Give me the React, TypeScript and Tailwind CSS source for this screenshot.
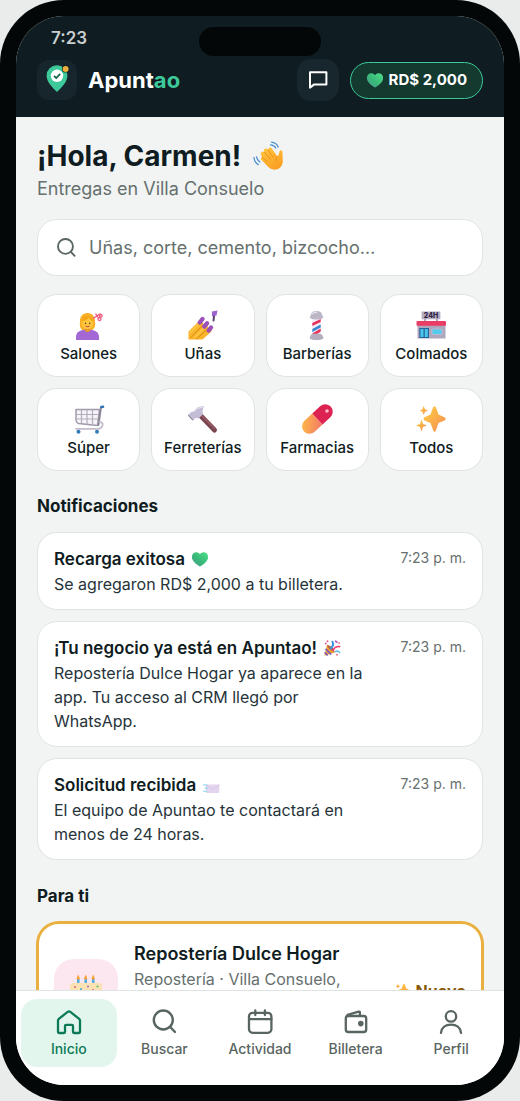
import React from "react";

type IconProps = { className?: string };

const SearchIcon: React.FC<IconProps> = ({ className }) => (
  <svg className={className} viewBox="0 0 28 28" fill="none" stroke="currentColor" strokeWidth="2.4" strokeLinecap="round" aria-hidden="true">
    <circle cx="13.3" cy="12" r="9.5" />
    <path d="M20.2 19 25 24" />
  </svg>
);

const HomeIcon: React.FC<IconProps> = ({ className }) => (
  <svg className={className} viewBox="0 0 28 28" fill="none" stroke="currentColor" strokeWidth="2.3" strokeLinejoin="round" aria-hidden="true">
    <path d="M3 12.6V23.6Q3 25 4.4 25H9Q10 25 10 24V18Q10 16.9 11.1 16.9H16.9Q18 16.9 18 18V24Q18 25 19 25H23.6Q25 25 25 23.6V12.6Q25 11.6 24.2 10.9L15 3.7Q14 3 13 3.7L3.8 10.9Q3 11.6 3 12.6Z" />
  </svg>
);

const CalendarIcon: React.FC<IconProps> = ({ className }) => (
  <svg className={className} viewBox="0 0 28 28" fill="none" stroke="currentColor" strokeWidth="2.3" strokeLinecap="round" aria-hidden="true">
    <rect x="3" y="4.8" width="22.4" height="20" rx="3.6" />
    <path d="M3 11.2H25.4M9.3 2.4V7M18.9 2.4V7" />
  </svg>
);

const WalletIcon: React.FC<IconProps> = ({ className }) => (
  <svg className={className} viewBox="0 0 28 28" fill="none" stroke="currentColor" strokeWidth="2.3" strokeLinejoin="round" aria-hidden="true">
    <rect x="3.8" y="8" width="20.4" height="16" rx="2.6" />
    <path d="M4.600 8.400 5.600 6.800 16.600 3.600Q17.900 3.300 17.900 4.600V8" />
    <circle cx="18.8" cy="15.6" r="2.8" fill="currentColor" stroke="none" />
  </svg>
);

const UserIcon: React.FC<IconProps> = ({ className }) => (
  <svg className={className} viewBox="0 0 28 28" fill="none" stroke="currentColor" strokeWidth="2.3" strokeLinecap="round" aria-hidden="true">
    <circle cx="14" cy="8.4" r="5.2" />
    <path d="M4 24.8C4.6 19.6 8.6 16.6 14 16.6S23.4 19.6 24 24.8" />
  </svg>
);

const ChatIcon: React.FC<IconProps> = ({ className }) => (
  <svg className={className} viewBox="0 0 24 24" fill="none" stroke="currentColor" strokeWidth="2" strokeLinejoin="round" aria-hidden="true">
    <path d="M4 19.6V4.2H20.4V16.4H8.2Z" />
  </svg>
);

const LogoPin: React.FC<IconProps> = ({ className }) => (
  <svg className={className} viewBox="0 0 40 40" aria-hidden="true">
    <path d="M20 32C15.5 27.3 9.6 22 9.6 15.7A10.4 10.4 0 0 1 30.4 15.7C30.4 22 24.5 27.3 20 32Z" fill="#3ec99b" />
    <circle cx="20" cy="15.8" r="6.2" fill="#fff" />
    <path d="M17 15.8 19.2 18 23.2 13.8" fill="none" stroke="#11604a" strokeWidth="1.7" />
    <circle cx="28.6" cy="9" r="3.6" fill="#0f1c21" />
    <circle cx="28.6" cy="9" r="3" fill="#eeaf3c" />
  </svg>
);

const HeartIcon: React.FC<IconProps> = ({ className }) => (
  <svg className={className} viewBox="0 0 20 20" aria-hidden="true">
    <defs>
      <linearGradient id="heart" x1="0" y1="1" x2="1" y2="0">
        <stop offset="0" stopColor="#4f9f95" />
        <stop offset=".45" stopColor="#38b878" />
        <stop offset="1" stopColor="#4fe08a" />
      </linearGradient>
    </defs>
    <path d="M10 18.4C6 16 1 12.4 1 7.8C1 4.600 3.200 2.600 5.900 2.600C7.800 2.600 9.200 3.400 10 4.800C10.800 3.400 12.200 2.600 14.100 2.600C16.800 2.600 19 4.600 19 7.800C19 12.400 14 16 10 18.400Z" fill="url(#heart)" />
  </svg>
);

const WaveIcon: React.FC<IconProps> = ({ className }) => (
  <svg className={className} viewBox="0 0 32 32" fill="none" strokeLinecap="round" aria-hidden="true">
    <defs>
      <linearGradient id="wave" x1="0" y1="0" x2=".6" y2="1">
        <stop offset="0" stopColor="#ffc93f" />
        <stop offset="1" stopColor="#fb9f24" />
      </linearGradient>
    </defs>
    <path
      d="M8.200 12.200Q10 10.600 11.500 12.200L10.900 10.300Q11 8.300 13 8.400Q14.200 8.500 15 10L15.600 8.200Q17.400 6.800 19 8.700L24.300 16.200Q25.500 16 26 13.500L26.600 11Q28 9.600 29.300 11.200Q29.800 13 29.500 15L29.800 21Q29.500 27.500 24.500 29.300Q19 31 15 26.800L8 19.600Q7.200 17.600 9.200 17L7.800 14.500Q7.200 13.200 8.200 12.200Z"
      fill="url(#wave)"
    />
    <path d="M11.500 12.200 17 19M15 10 20 17M9.200 17 14 21.500M24.300 16.200Q22.500 18 22.800 20.500" stroke="#e98a1e" strokeWidth=".9" />
    <g stroke="#4a90d0" strokeWidth="1.3">
      <path d="M17.500 4.800Q21 4.800 22.800 8" />
      <path d="M18.500 2.200Q23.200 2.600 25.200 7" />
      <path d="M3.600 17Q4 20 6.800 22" />
      <path d="M1 17.500Q1.300 22.200 5.200 24.600" />
    </g>
  </svg>
);

const SalonIcon: React.FC<IconProps> = ({ className }) => (
  <svg className={className} viewBox="0 0 32 32" aria-hidden="true">
    <path d="M7 13C6.500 6 11 4 14.500 4C19.500 4 22.500 8 22 13C23 17 21 20.500 19 21H10C7 20 6.500 17 7 13Z" fill="#f9b12a" />
    <path d="M3 31V28C3 22.500 8 20.500 14.500 20.500S26 22.500 26 28V31Z" fill="#a368d4" />
    <path d="M12 19H17V22Q14.500 24 12 22Z" fill="#e99a20" />
    <circle cx="14.500" cy="14.600" r="5.500" fill="#ffc83d" />
    <path d="M9 12Q14 12 16 8Q17 11 20 12.500Q20 7 14.500 6.500Q9 7 9 12Z" fill="#f5a51c" />
    <circle cx="12.500" cy="14.200" r=".8" fill="#5b3825" />
    <circle cx="16.700" cy="14.200" r=".8" fill="#5b3825" />
    <path d="M12.500 17Q14.500 18.600 16.600 17" stroke="#c23c50" fill="none" />
    <g fill="none" stroke="#ee5a80" strokeWidth="1.300">
      <path d="M20 9.500 27.500 4.600M22.500 4.600 25.500 9" />
      <circle cx="26.500" cy="10" r="1.500" />
      <circle cx="27.800" cy="6.800" r="1.300" />
    </g>
  </svg>
);

const NailsIcon: React.FC<IconProps> = ({ className }) => (
  <svg className={className} viewBox="0 0 32 32" strokeLinecap="round" aria-hidden="true">
    <path d="M1.500 22.500 11.500 12.500Q14 11 15.500 13.500L17 15.500Q19.500 15 20.500 17.500L21.500 19.500Q25 19.500 24.500 22.500L15.500 30.500H1.500Z" fill="#f9b429" />
    <path d="M4 28.500 15.500 16.500M9.500 30 20.500 20" stroke="#d98a18" />
    <path d="M3 24 11.500 15.500M8 28 16.500 19.500" stroke="#ffc94a" strokeWidth="1.600" />
    <path d="M12.800 13.500 15.500 10M17.300 17.500 20 14.300M21.700 21.500 24 18.500" stroke="#9a50b8" strokeWidth="4.400" />
    <path d="M25 2.500 30.500 1.500 29.500 6.500 25 7.500Z" fill="#9d63d0" />
    <path d="M27 7.500 26.500 11.500" stroke="#554069" strokeWidth="2" />
  </svg>
);

const BarberIcon: React.FC<IconProps> = ({ className }) => (
  <svg className={className} viewBox="0 0 32 32" aria-hidden="true">
    <path d="M11.300 9H19.700V26H11.300Z" fill="#f1edf7" />
    <path d="M11.300 14 19.700 10V13L11.300 17ZM11.300 24.500 19.700 19.500V22.500L17 24.500 13 26.500Z" fill="#e7315f" />
    <path d="M11.300 20 19.700 15.500V18.500L11.300 23Z" fill="#3684d1" />
    <path d="M10 6Q10 2 15.500 2T21 6L22.500 8Q21.500 10.500 15.500 10.500T8.500 8Z" fill="#bcb7c7" />
    <path d="M11 5Q13 3 16 3.500" stroke="#e9e5ef" strokeWidth="1.400" fill="none" />
    <path d="M10 25.500Q15.500 23.500 21 25.500L22.500 29Q21.500 31 15.500 31T8.500 29Z" fill="#b3adbf" />
  </svg>
);

const StoreIcon: React.FC<IconProps> = ({ className }) => (
  <svg className={className} viewBox="0 0 32 32" aria-hidden="true">
    <path d="M10 9V13M22 9V13" stroke="#8b8299" strokeWidth="1.400" />
    <rect x="6.600" y="2.500" width="18.800" height="7.800" rx=".6" fill="#b4adc4" />
    <text x="16" y="9" textAnchor="middle" fontSize="7" fontWeight="800" fill="#30233f" fontFamily="Inter, sans-serif">24H</text>
    <rect x="2.500" y="15" width="28" height="14.500" fill="#afa7be" />
    <rect x="1.500" y="12" width="29.500" height="4.800" rx="1" fill="#ea3d65" />
    <rect x="4.300" y="19" width="9.700" height="10" fill="#28639a" />
    <path d="M5.500 20H8.500V28H5.500ZM9.800 20H12.800V28H9.800Z" fill="#48c7ed" />
    <rect x="17" y="20" width="10" height="5.500" rx=".5" fill="#54cbee" stroke="#c5bdd0" strokeWidth=".8" />
  </svg>
);

const CartIcon: React.FC<IconProps> = ({ className }) => (
  <svg className={className} viewBox="0 0 32 32" fill="none" strokeLinecap="round" strokeLinejoin="round" aria-hidden="true">
    <path d="M3 6.500H26.500L24.500 22.500 5.500 20.500Q3.500 20 3 17Z" fill="#f6f4f8" stroke="#a19aab" strokeWidth="1.500" />
    <path d="M8.500 7V20M14 7V21M19.500 7V21.500M3.500 11.500H25.500M4 16H25" stroke="#b3adbc" strokeWidth="1.200" />
    <path d="M25.500 22 28 4.500" stroke="#8c8595" strokeWidth="1.800" />
    <path d="M26.500 19Q30.500 19.500 29.500 22.500Q28.500 25.800 25 25.800H3" stroke="#c5bdcc" strokeWidth="1.800" />
    <path d="M28.300 4 30 3.800" stroke="#2f75b5" strokeWidth="2.600" />
    <circle cx="5.500" cy="28.700" r="2" fill="#347bbb" />
    <circle cx="24" cy="28.700" r="2" fill="#347bbb" />
  </svg>
);

const HammerIcon: React.FC<IconProps> = ({ className }) => (
  <svg className={className} viewBox="0 0 32 32" aria-hidden="true">
    <path d="M12 11 27.500 27" stroke="#7b4550" strokeWidth="5" strokeLinecap="round" />
    <path d="M13 11 27.500 25.500" stroke="#99606a" strokeWidth="1.300" strokeLinecap="round" />
    <path d="M1.500 11.500 4.500 8.800 7 8.500Q9.500 3 17 3.200L15.500 7.500 16 11 11.500 15.500 8.500 15 6.500 17Z" fill="#c4bdd6" />
    <path d="M1.500 11.500 6.500 17 5.500 17.500 1 12.500Z" fill="#817b91" />
    <path d="M7 8.500Q10 4.500 16 4" stroke="#e9e4f3" fill="none" />
  </svg>
);

const PillIcon: React.FC<IconProps> = ({ className }) => (
  <svg className={className} viewBox="0 0 32 32" aria-hidden="true">
    <defs>
      <linearGradient id="pill" x1="0" y1="0" x2="1" y2="1">
        <stop offset="0" stopColor="#ffbe42" />
        <stop offset="1" stopColor="#f27968" />
      </linearGradient>
    </defs>
    <g transform="rotate(-43 16.4 16)">
      <path d="M16.400 8.500H5.700A7.500 7.500 0 0 0 5.700 23.500H16.400Z" fill="url(#pill)" />
      <path d="M16.400 8.500H27.100A7.500 7.500 0 0 1 27.100 23.500H16.400Z" fill="#dc2352" />
    </g>
    <circle cx="26" cy="8" r="1.800" fill="#ffb8c9" />
  </svg>
);

const SparklesIcon: React.FC<IconProps> = ({ className }) => (
  <svg className={className} viewBox="0 0 32 32" aria-hidden="true">
    <defs>
      <linearGradient id="spark" x1="0" y1="0" x2="1" y2="1">
        <stop offset="0" stopColor="#ffcf3f" />
        <stop offset="1" stopColor="#f58d55" />
      </linearGradient>
    </defs>
    <g fill="url(#spark)">
      <path d="M19.300 3.500Q20.200 3 21 4.500L23.500 11.500 30 14.600Q31.500 16 30 17.200L23.500 20 20.800 27.800Q19.500 29.500 18.300 27.800L15.500 20 9 17.200Q8 16 9 14.600L15.500 11.500 18 4.500Q18.500 3 19.300 3.500Z" />
      <path d="M8.700 3 10 6.300 13 7.500 10 8.700 8.700 12 7.400 8.700 4.500 7.500 7.400 6.300Z" />
      <path d="M6.500 16.500 8 21 12 22.500 8 24 6.500 28.500 5 24 1 22.500 5 21Z" />
    </g>
  </svg>
);

const PartyIcon: React.FC<IconProps> = ({ className }) => (
  <svg className={className} viewBox="0 0 20 20" fill="none" strokeLinecap="round" aria-hidden="true">
    <path d="M1.500 18.500 4.500 6.500Q9.500 8.500 13 15Z" fill="#f4a333" />
    <path d="M3.400 11.500 8.500 16.600M2.400 15.500 4.600 17.600" stroke="#7f5bb0" strokeWidth="2" />
    <path d="M4.500 6.500Q4.500 11 13 15Q12 8.500 4.500 6.500Z" fill="#b8603f" />
    <path d="M8.500 10.500Q12.500 7.500 10.500 3" stroke="#3d93dd" strokeWidth="2.200" />
    <path d="M11 12.500Q14 7.500 18.500 8.500" stroke="#ef4178" strokeWidth="1.800" />
    <path d="M14 14Q16 12.500 18.500 15" stroke="#55b8e8" strokeWidth="1.600" />
    <g strokeWidth="2">
      <path d="M5 2.500H5.100M3 5H3.100" stroke="#e85a8c" />
      <path d="M14 2.500 15.500 3.500" stroke="#b861c8" />
      <path d="M18 4.500H18.100M15.500 17.500H15.600" stroke="#f36b86" />
    </g>
  </svg>
);

const MailIcon: React.FC<IconProps> = ({ className }) => (
  <svg className={className} viewBox="0 0 20 20" aria-hidden="true">
    <path d="M4 9.500H19.500L19 19H4.500Z" fill="#e3d5ef" />
    <path d="M4 9.500 12 14.500 19.500 9.500" stroke="#d3c1e3" strokeWidth=".8" fill="none" />
    <path d="M1 10H6M3 13.500H6.500M1 17H5.500" stroke="#8cd6ef" strokeWidth="1.200" />
  </svg>
);

const CakeIcon: React.FC<IconProps> = ({ className }) => (
  <svg className={className} viewBox="0 0 36 36" aria-hidden="true">
    <path d="M9 6H11.500V13H9ZM16.500 6H19V13H16.500ZM24 6H26.500V13H24Z" fill="#54add8" />
    <path d="M10.200 1.500 11.900 5.500Q10.200 7.500 8.500 5.500ZM17.700 1.500 19.400 5.500Q17.700 7.500 16 5.500ZM25.200 1.500 26.900 5.500Q25.200 7.500 23.500 5.500Z" fill="#f6a12e" />
    <rect x="2" y="10" width="32" height="24" rx="4" fill="#f4cf96" />
    <path d="M2 20V14Q2 10 6 10H30Q34 10 34 14V20Q31 23 28 20T23 20T18 20T13 20T8 20Q5 22 2 20Z" fill="#fae2b2" />
    <circle cx="7" cy="14" r="1" fill="#e85d8a" />
    <circle cx="13" cy="16" r="1" fill="#45a7d8" />
    <circle cx="20" cy="13.500" r="1" fill="#9d69cb" />
    <circle cx="25" cy="17" r="1" fill="#e85d8a" />
    <circle cx="29.500" cy="13.500" r="1" fill="#4fb978" />
  </svg>
);

const categories = [
  { label: "Salones", Icon: SalonIcon },
  { label: "Uñas", Icon: NailsIcon },
  { label: "Barberías", Icon: BarberIcon },
  { label: "Colmados", Icon: StoreIcon },
  { label: "Súper", Icon: CartIcon },
  { label: "Ferreterías", Icon: HammerIcon },
  { label: "Farmacias", Icon: PillIcon },
  { label: "Todos", Icon: SparklesIcon },
];

const notifications = [
  { title: "Recarga exitosa", body: "Se agregaron RD$ 2,000 a tu billetera.", time: "7:23 p. m.", Icon: HeartIcon },
  {
    title: "¡Tu negocio ya está en Apuntao!",
    body: "Repostería Dulce Hogar ya aparece en la app. Tu acceso al CRM llegó por WhatsApp.",
    time: "7:23 p. m.",
    Icon: PartyIcon,
  },
  {
    title: "Solicitud recibida",
    body: "El equipo de Apuntao te contactará en menos de 24 horas.",
    time: "7:23 p. m.",
    Icon: MailIcon,
  },
];

const tabs = [
  { label: "Inicio", Icon: HomeIcon, active: true },
  { label: "Buscar", Icon: SearchIcon, active: false },
  { label: "Actividad", Icon: CalendarIcon, active: false },
  { label: "Billetera", Icon: WalletIcon, active: false },
  { label: "Perfil", Icon: UserIcon, active: false },
];

const Header: React.FC = () => (
  <header className="shrink-0 bg-[#0f1c21] px-[21px] pb-4">
    <div className="flex h-[43px] items-center pl-[14px] pt-[2px] text-[17px] font-semibold text-[#c9cecf]">7:23</div>
    <div className="flex items-center justify-between">
      <div className="flex items-center gap-[11px]">
        <div className="h-10 w-10 rounded-xl bg-[#17252d]">
          <LogoPin className="h-10 w-10" />
        </div>
        <span className="text-[22px] font-bold text-white">
          Apunt<span className="text-[#3ec99b]">ao</span>
        </span>
      </div>
      <div className="flex items-center gap-[11px]">
        <button type="button" aria-label="Mensajes" className="flex h-[42px] w-[42px] items-center justify-center rounded-[14px] bg-[#18262e] text-white">
          <ChatIcon className="h-6 w-6" />
        </button>
        <button type="button" className="flex h-[37px] items-center gap-[5px] rounded-full border border-[#3ec99b] bg-[#14392f] px-[15px] text-[15px] font-bold text-white">
          <HeartIcon className="h-[18px] w-[18px]" />
          RD$ 2,000
        </button>
      </div>
    </div>
  </header>
);

const App: React.FC = () => {
  return (
    <div className="h-screen bg-[#eaeceb] font-['Inter',sans-serif] text-[#0f1c21]">
      <div className="relative h-full rounded-[64px] bg-[#030707] p-4">
        <div className="absolute left-1/2 top-[27px] h-[29px] w-[122px] -translate-x-1/2 rounded-full bg-[#030707]" />
        <div className="flex h-full flex-col overflow-hidden rounded-[48px] bg-[#f2f4f4]">
          <Header />

          <main className="min-h-0 flex-1 overflow-y-auto px-[21px] pt-[22px] [scrollbar-width:none]">
            <h1 className="flex h-[34px] items-center gap-3 text-[28px] font-bold">
              ¡Hola, Carmen!
              <WaveIcon className="h-8 w-8" />
            </h1>
            <p className="text-[18px] leading-8 text-[#66706e]">Entregas en Villa Consuelo</p>

            <label className="mt-[14px] flex h-[57px] items-center gap-3 rounded-[20px] border border-[#dfe4e3] bg-white px-[17px]">
              <SearchIcon className="h-[22px] w-[22px] shrink-0 text-[#59655f]" />
              <input
                type="search"
                aria-label="Buscar"
                placeholder="Uñas, corte, cemento, bizcocho…"
                className="min-w-0 flex-1 bg-transparent text-[18px] outline-none placeholder:text-[#66706e]"
              />
            </label>

            <div className="mt-[18px] grid grid-cols-4 gap-[11px]">
              {categories.map(({ label, Icon }) => (
                <button key={label} type="button" className="flex h-[83px] flex-col items-center gap-px rounded-[20px] border border-[#dfe4e3] bg-white pt-[14px]">
                  <Icon className="h-8 w-8 shrink-0" />
                  <span className="text-[15px] font-medium leading-6">{label}</span>
                </button>
              ))}
            </div>

            <h2 className="mt-[23px] text-[17px] font-bold leading-6">Notificaciones</h2>
            <div className="mt-[14px] flex flex-col gap-[11px]">
              {notifications.map(({ title, body, time, Icon }) => (
                <article key={title} className="flex justify-between gap-4 rounded-[20px] border border-[#dfe4e3] bg-white px-4 py-[13px]">
                  <div className="max-w-[320px]">
                    <h3 className="flex items-center gap-[6px] text-[17px] font-semibold leading-[26px]">
                      {title}
                      <Icon className="h-[18px] w-[18px]" />
                    </h3>
                    <p className="text-base leading-6 text-[#26343a]">{body}</p>
                  </div>
                  <time className="shrink-0 text-sm leading-6 text-[#66706e]">{time}</time>
                </article>
              ))}
            </div>

            <h2 className="mt-6 text-[17px] font-bold leading-6">Para ti</h2>
            <article className="mt-[14px] flex min-h-[138px] items-center gap-4 rounded-[22px] border-2 border-[#eab03f] bg-white px-[15px] ring-1 ring-[#eab03f]">
              <div className="flex h-16 w-16 shrink-0 items-center justify-center rounded-[20px] bg-[#fce7f1]">
                <CakeIcon className="h-9 w-9" />
              </div>
              <div className="flex-1 self-start pt-[17px]">
                <h3 className="text-[18px] font-semibold leading-[26px]">Repostería Dulce Hogar</h3>
                <p className="text-base leading-6 text-[#66706e]">Repostería · Villa Consuelo,</p>
              </div>
              <span className="flex items-center gap-1 text-base font-bold text-[#8a5a0c]">
                <SparklesIcon className="h-[18px] w-[18px]" />
                Nuevo
              </span>
            </article>
          </main>

          <nav className="grid shrink-0 grid-cols-5 border-t border-[#dfe4e3] bg-white px-[5px] pb-[18px] pt-2">
            {tabs.map(({ label, Icon, active }) => (
              <a
                key={label}
                href="#"
                className={
                  active
                    ? "flex h-[68px] flex-col items-center gap-px rounded-2xl bg-[#e3f6ee] pt-[9px] text-[#0d7a57]"
                    : "flex h-[68px] flex-col items-center gap-px rounded-2xl pt-[9px] text-[#59655f]"
                }
              >
                <Icon className="h-7 w-7" />
                <span className="text-sm font-medium leading-6">{label}</span>
              </a>
            ))}
          </nav>
        </div>
      </div>
    </div>
  );
};

export default App;
